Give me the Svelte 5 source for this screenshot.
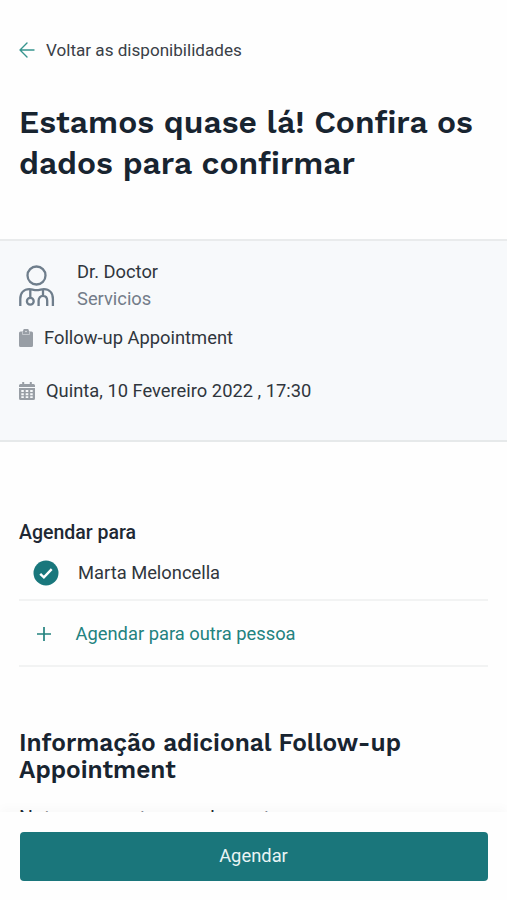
<script>
  const title = ['Estamos quase lá! Confira os', 'dados para confirmar'];
  const info = ['Informação adicional Follow-up', 'Appointment'];
</script>

<div class="page">
  <main>
    <header>
      <a class="back" href="#back">
        <svg width="16" height="16" viewBox="0 0 16 16" fill="none" stroke="#37958f" stroke-width="1.4" stroke-linecap="round" stroke-linejoin="round">
          <path d="M15 8H1M8 1 1 8l7 7" />
        </svg>
        <span>Voltar as disponibilidades</span>
      </a>
      <h1>{#each title as line}<span>{line}</span>{/each}</h1>
    </header>

    <section class="summary">
      <div class="doctor">
        <svg width="36" height="42" viewBox="0 0 36 42" fill="none" stroke="#6f7e8c" stroke-width="2.3">
          <circle cx="17.500" cy="10.500" r="9" />
          <path d="M1.300 41V34c0-6.200 3.700-9.800 9-9.800 2.200 0 4.600 1 7.300 1s5.100-1 7.300-1c5.300 0 9 3.600 9 9.800v7" />
          <path d="M11.300 25v7.500M24 25v6M19.600 41v-5.200c0-3 1.800-4.900 4.300-4.900s4.300 1.900 4.300 4.900V41" />
          <circle cx="11.300" cy="36.300" r="3.400" />
        </svg>
        <div class="names"><span class="name">Dr. Doctor</span><span class="service">Servicios</span></div>
      </div>
      <div class="row visit">
        <svg width="14" height="18" viewBox="0 0 14 18">
          <path fill="#989ea5" d="M1.500 2.400H4a3 3 0 0 1 6 0h2.500A1.500 1.500 0 0 1 14 3.900v12.600a1.500 1.500 0 0 1-1.500 1.500h-11A1.500 1.500 0 0 1 0 16.500V3.900a1.500 1.500 0 0 1 1.500-1.500Z" />
          <path fill="none" stroke="#d5d9dd" stroke-width=".7" d="M3.500 3v2.500h7V3" />
          <circle cx="7" cy="2.500" r=".7" fill="#f7f9fb" />
        </svg>
        <span>Follow-up Appointment</span>
      </div>
      <div class="row date">
        <svg width="16" height="18" viewBox="0 0 16 18">
          <path fill="#989ea5" d="M3.200 0h2v2h5.600V0h2v2h1.700A1.500 1.500 0 0 1 16 3.500V5H0V3.500A1.500 1.500 0 0 1 1.500 2h1.700Z" />
          <path fill="#989ea5" fill-rule="evenodd" d="M0 6h16v10.500a1.500 1.500 0 0 1-1.500 1.500h-13A1.500 1.500 0 0 1 0 16.500ZM2.300 8v2h2.500V8Zm4.400 0v2h2.600V8Zm4.500 0v2h2.500V8ZM2.300 11.200v2h2.500v-2Zm4.400 0v2h2.600v-2Zm4.500 0v2h2.500v-2ZM2.300 14.300v1.700h2.500v-1.700Zm4.400 0v1.700h2.600v-1.700Zm4.500 0v1.700h2.500v-1.700Z" />
        </svg>
        <span>Quinta, 10 Fevereiro 2022 , 17:30</span>
      </div>
    </section>

    <section class="people">
      <h3>Agendar para</h3>
      <div class="person selected">
        <svg width="26" height="26" viewBox="0 0 26 26">
          <circle cx="13" cy="13" r="12.500" fill="#19777c" />
          <path d="m7.200 13.800 3.700 3.600 7.800-8.200" fill="none" stroke="#fff" stroke-width="2.400" />
        </svg>
        <span>Marta Meloncella</span>
      </div>
      <div class="person other">
        <svg width="14" height="14" viewBox="0 0 14 14"><path d="M7 0v14M0 7h14" stroke="#23827f" stroke-width="1.700" /></svg>
        <span>Agendar para outra pessoa</span>
      </div>
    </section>

    <section class="info">
      <h2>{#each info as line}<span>{line}</span>{/each}</h2>
      <p>Notas para este agendamento</p>
    </section>
  </main>
  <footer><button>Agendar</button></footer>
</div>

<style>
  :global(body) { margin: 0; background: #fff; }
  .page { height: 900px; width: 100%; display: flex; flex-direction: column; overflow: hidden; background: #fefefe; font: 18.34px/26px Roboto, sans-serif; color: #30363d; box-sizing: border-box; }
  main { height: 812px; flex: none; overflow: hidden; }
  header { height: 239px; padding: 37px 19px 0; box-sizing: border-box; }
  .back { display: flex; align-items: center; gap: 11px; color: #3a4047; text-decoration: none; font-size: 17.1px; }
  h1, h2 { font-family: "Work Sans", Inter, sans-serif; font-weight: 600; color: #182430; margin: 0; }
  h1 span, h2 span { display: block; white-space: nowrap; }
  h1 { font-size: 31.8px; line-height: 41px; margin-top: 39px; }
  .summary { height: 203px; box-sizing: border-box; background: #f7f9fb; border-top: 2px solid #e9ebec; border-bottom: 2px solid #e6e9ea; padding: 17px 19px 0; }
  .doctor { display: flex; align-items: center; gap: 22px; height: 54px; }
  .doctor svg { margin-top: 1px; }
  .names { display: flex; flex-direction: column; line-height: 27px; }
  .service { color: #737c89; }
  .row { display: flex; align-items: center; height: 26px; }
  .visit { gap: 11px; margin-top: 13px; }
  .date { gap: 11px; margin-top: 27px; }
  .people { padding: 78px 19px 0; }
  h3 { margin: 0; font-size: 19.5px; font-weight: 500; color: #202833; }
  .person { display: flex; align-items: center; border-bottom: 2px solid #f2f3f3; box-sizing: border-box; }
  .selected { height: 55px; padding: 1px 0 0 14px; gap: 19px; }
  .other { height: 66px; padding: 2px 0 0 18px; gap: 24.5px; color: #23827f; }
  .info { padding: 62px 19px 0; }
  h2 { font-size: 24.45px; line-height: 27px; }
  p { margin: 23px 0 0; font-size: 19.5px; white-space: nowrap; color: #202833; }
  footer { position: relative; flex: none; height: 88px; box-sizing: border-box; padding: 20px 19px 19px 20px; background: #fefefe; box-shadow: 0 -4px 10px rgba(0, 0, 0, .025); }
  button { display: block; width: 100%; height: 49px; border: 0; border-radius: 4px; background: #1a767b; color: #e9f4f4; font: 18.35px/26px Roboto, sans-serif; padding: 0 1px 2px 0; }
</style>
